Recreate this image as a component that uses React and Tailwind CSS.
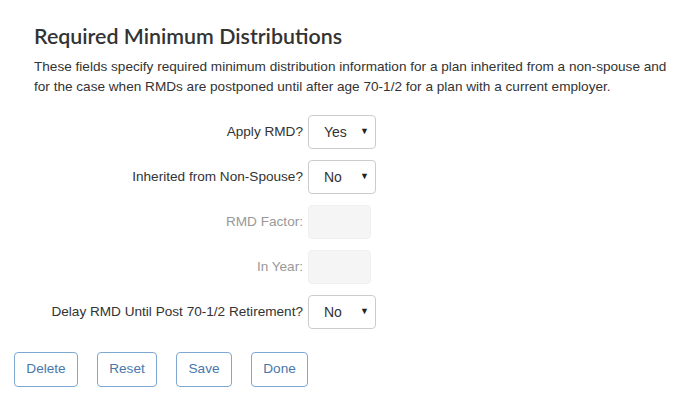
import React from "react";

const fields = [
    {label: "Apply RMD?", type: "select", value: "Yes"},
    {label: "Inherited from Non-Spouse?", type: "select", value: "No"},
    {label: "RMD Factor:", type: "input", disabled: true},
    {label: "In Year:", type: "input", disabled: true},
    {label: "Delay RMD Until Post 70-1/2 Retirement?", type: "select", value: "No"},
];

const buttons = [
    {name: "Delete", cls: "w-[64px]"},
    {name: "Reset", cls: "w-[60px]"},
    {name: "Save", cls: "w-[56px]"},
    {name: "Done", cls: "w-[57px]"},
];

const FakeSelect = ({value}) => (
    <div className="w-[68px] h-[34px] border border-[#cccccc] rounded-[4px] bg-white flex items-center pl-[15px] pr-[6px] text-[14px] text-[#333333]">
        <span className="flex-1">{value}</span>
        <span className="text-[9px] text-[#222]">▼</span>
    </div>
);

const App = () => {
    return (
        <div className="w-[688px] h-[410px] bg-white overflow-hidden" style={{fontFamily: '"Liberation Sans", Arial, sans-serif'}}>
            {/* header */}
            <section className="pl-[34px] pt-[22px]">
                <h1 className="text-[21.4px] leading-[28px] font-semibold text-[#333333]" style={{fontFamily: 'Lato, "Noto Sans", sans-serif'}}>
                    Required Minimum Distributions
                </h1>
                <p className="mt-[7px] w-[645px] text-[13.6px] leading-[20px] text-[#333333]">
                    These fields specify required minimum distribution information for a plan inherited from a non-spouse and for the case when RMDs are postponed until after age 70-1/2 for a plan with a current employer.
                </p>
            </section>

            {/* form */}
            <div className="mt-[18px] flex flex-col gap-[11px]">
                {fields.map((f) => (
                    <div key={f.label} className="flex items-center">
                        <label className={`w-[308px] pr-[5px] text-right text-[13.6px] ${f.disabled ? "text-[#999999]" : "text-[#333333]"}`}>
                            {f.label}
                        </label>
                        {f.type === "select" ? (
                            <FakeSelect value={f.value}/>
                        ) : (
                            <div className="w-[63px] h-[34px] rounded-[4px] border border-[#f0f0f0] bg-[#f5f5f5]"/>
                        )}
                    </div>
                ))}
            </div>

            {/* actions */}
            <div className="mt-[23px] pl-[14px] flex gap-[19px]">
                {buttons.map((b) => (
                    <button key={b.name} className={`${b.cls} h-[35px] border border-[#7ea8d2] rounded-[4px] bg-white text-[13.6px] text-[#4a77ab] text-center`}>
                        {b.name}
                    </button>
                ))}
            </div>
        </div>
    );
};

export default App;
